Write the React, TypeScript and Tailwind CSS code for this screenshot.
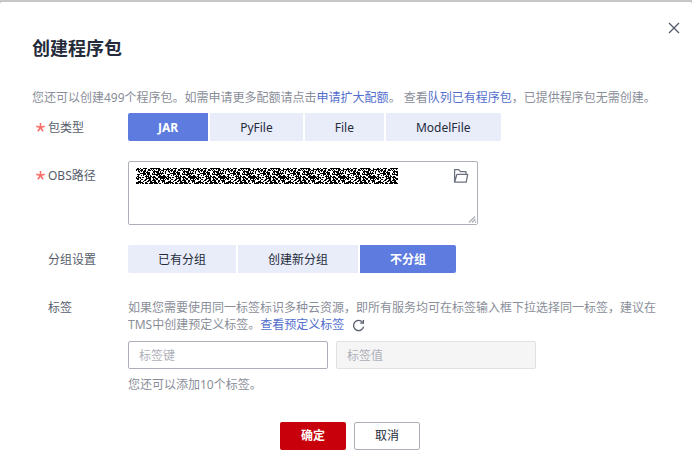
import { useState } from "react";

const packageTypes = ["JAR", "PyFile", "File", "ModelFile"];
const groupOptions = ["已有分组", "创建新分组", "不分组"];

const TILE_WIDTH = 30;
const TILE_HEIGHT = 16;

// Dark pixels of one mosaic tile, always the same noise
function buildMosaic() {
  const cells: { x: number; y: number }[] = [];
  let seed = 20231;
  for (let y = 0; y < TILE_HEIGHT; y++) {
    for (let x = 0; x < TILE_WIDTH; x++) {
      seed = (seed * 1103515245 + 12345) % 2147483648;
      const wave = Math.sin((x + y) * 0.9) * 0.12 + Math.sin((x - y) * 0.42) * 0.12;
      if (seed / 2147483648 < 0.56 + wave) {
        cells.push({ x, y });
      }
    }
  }
  return cells;
}

const mosaicCells = buildMosaic();

function Mosaic() {
  return (
    <svg
      className="pointer-events-none absolute top-[7px] left-2"
      width="262"
      height="16"
      shapeRendering="crispEdges"
      aria-hidden="true"
    >
      <defs>
        <pattern
          id="mosaic"
          width={TILE_WIDTH}
          height={TILE_HEIGHT}
          patternUnits="userSpaceOnUse"
        >
          {mosaicCells.map(({ x, y }) => (
            <rect key={`${x}-${y}`} x={x} y={y} width="1" height="1" />
          ))}
        </pattern>
      </defs>
      <rect width="262" height="16" fill="url(#mosaic)" />
    </svg>
  );
}

function Segmented({
  label,
  options,
  value,
  onChange,
}: {
  label: string;
  options: string[];
  value: string;
  onChange: (value: string) => void;
}) {
  return (
    <div
      role="group"
      aria-label={label}
      className="flex flex-wrap gap-0.5 overflow-hidden rounded-xs"
    >
      {options.map((option) => (
        <button
          key={option}
          type="button"
          aria-pressed={option === value}
          onClick={() => onChange(option)}
          className={
            option === value
              ? "h-7 bg-[#5e7ce0] px-[30px] pt-px font-bold text-white"
              : "h-7 bg-[#e9edfa] px-[30px] pt-px text-[#252b3a]"
          }
        >
          {option}
        </button>
      ))}
    </div>
  );
}

function RowLabel({
  text,
  htmlFor,
  required,
}: {
  text: string;
  htmlFor?: string;
  required?: boolean;
}) {
  return (
    <label
      htmlFor={htmlFor}
      className="flex h-7 w-24 shrink-0 items-center pt-px text-[#575d6c]"
    >
      <span className="flex w-4 justify-center">
        {required && (
          <svg width="9" height="9" viewBox="0 0 9 9" stroke="#f66f6a" strokeWidth="1.6">
            <path d="M4.5 0v4.5M4.5 4.5L.3 3.2M4.5 4.5l4.2-1.3M4.5 4.5L1.9 8.3M4.5 4.5l2.6 3.8" />
          </svg>
        )}
      </span>
      {text}
    </label>
  );
}

export default function App() {
  const [packageType, setPackageType] = useState("JAR");
  const [group, setGroup] = useState("不分组");

  return (
    <div className="bg-[#c6c6c6] pt-0.5 font-['Noto_Sans','Noto_Sans_CJK_SC',sans-serif] text-xs">
      <main className="relative min-h-[calc(100vh-2px)] rounded-t-xs bg-white px-8 pt-8 pb-4">
        <button type="button" aria-label="关闭" className="absolute top-[18px] right-2.5 p-0.5">
          <svg
            className="block"
            width="12"
            height="12"
            viewBox="0 0 12 12"
            stroke="#575d6c"
            strokeWidth="1.4"
          >
            <path d="M1 1l10 10M11 1L1 11" />
          </svg>
        </button>

        <h1 className="font-bold text-[#252b3a] text-lg leading-7">创建程序包</h1>

        <p className="mt-7 leading-4 text-[#8a8e99]">
          您还可以创建499个程序包。如需申请更多配额请点击
          <a href="#quota" className="text-[#526ecc]">
            申请扩大配额
          </a>
          。 查看
          <a href="#packages" className="text-[#526ecc]">
            队列已有程序包
          </a>
          ，已提供程序包无需创建。
        </p>

        <form onSubmit={(e) => e.preventDefault()}>
          <div className="mt-[7px] flex">
            <RowLabel text="包类型" required />
            <Segmented
              label="包类型"
              options={packageTypes}
              value={packageType}
              onChange={setPackageType}
            />
          </div>

          <div className="mt-5 flex">
            <RowLabel text="OBS路径" htmlFor="obs-path" required />
            <div className="relative w-full max-w-[350px]">
              <textarea
                id="obs-path"
                className="block h-16 w-full rounded-xs border border-[#adb0b8] py-1 pr-10 pl-2"
              />
              <Mosaic />
              <button type="button" aria-label="选择路径" className="absolute top-[7px] right-[9px]">
                <svg
                  className="block"
                  width="16"
                  height="16"
                  viewBox="0 0 16 16"
                  fill="none"
                  stroke="#6c7280"
                  strokeWidth="1.3"
                  strokeLinejoin="round"
                >
                  <path d="M1.6 14V1.6h4.2l1.6 2h5.6v2.8M1.6 14.2L3.9 6.4h10.8l-1.5 7.8z" />
                </svg>
              </button>
              <svg
                className="pointer-events-none absolute right-px bottom-px bg-white"
                width="10"
                height="10"
                viewBox="0 0 10 10"
                stroke="#adb0b8"
                strokeWidth="1.3"
                aria-hidden="true"
              >
                <path d="M2 8.5l6-6M5 8.5l3.5-3.5M8 8.5l1-1" />
              </svg>
            </div>
          </div>

          <div className="mt-5 flex">
            <RowLabel text="分组设置" />
            <Segmented
              label="分组设置"
              options={groupOptions}
              value={group}
              onChange={setGroup}
            />
          </div>

          <div className="mt-5 flex">
            <RowLabel text="标签" htmlFor="tag-key" />
            <div className="min-w-0 flex-1 pt-1.5 text-[#8a8e99]">
              <p className="leading-[17px]">
                如果您需要使用同一标签标识多种云资源，即所有服务均可在标签输入框下拉选择同一标签，建议在TMS中创建预定义标签。
                <a href="#tags" className="text-[#526ecc]">
                  查看预定义标签
                </a>
                <button type="button" aria-label="刷新" className="ml-2 align-middle">
                  <svg
                    className="block"
                    width="13"
                    height="13"
                    viewBox="0 0 13 13"
                    fill="none"
                    stroke="#575d6c"
                    strokeWidth="1.3"
                  >
                    <path d="M11.6 7.6A5.1 5.1 0 1 1 10.6 3.3" />
                    <path d="M11.4 1v3.2H8.2" />
                  </svg>
                </button>
              </p>
              <div className="mt-2 flex gap-2">
                <input
                  id="tag-key"
                  type="text"
                  placeholder="标签键"
                  className="h-7 w-[200px] rounded-xs border border-[#adb0b8] px-2.5 placeholder:text-[#adb0b8]"
                />
                <input
                  type="text"
                  disabled
                  aria-label="标签值"
                  placeholder="标签值"
                  className="h-7 w-[200px] rounded-xs border border-[#dfe1e6] bg-[#f5f5f6] px-2.5 placeholder:text-[#adb0b8]"
                />
              </div>
              <p className="mt-2 leading-4">您还可以添加10个标签。</p>
            </div>
          </div>

          <div className="mt-7 flex justify-center gap-2 pt-px pl-2">
            <button
              type="submit"
              className="h-7 w-[66px] rounded-xs bg-[#c7000b] font-bold text-white"
            >
              确定
            </button>
            <button
              type="button"
              className="h-7 w-[66px] rounded-xs border border-[#adb0b8] text-[#252b3a]"
            >
              取消
            </button>
          </div>
        </form>
      </main>
    </div>
  );
}
